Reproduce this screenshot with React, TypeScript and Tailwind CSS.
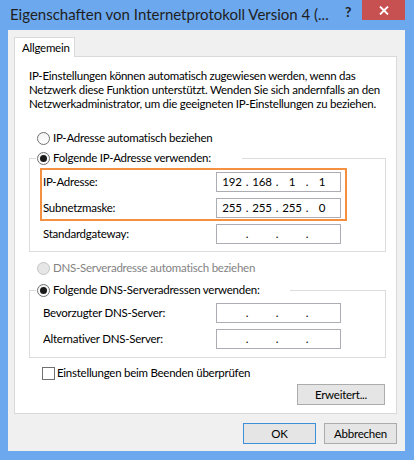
import React from 'react';

function Radio({ checked, disabled }: { checked?: boolean; disabled?: boolean }) {
	return (
		<span
			className={
				disabled
					? 'flex h-[13px] w-[13px] shrink-0 items-center justify-center rounded-full border border-[#c4c4c4] bg-[#e6e6e6]'
					: 'flex h-[13px] w-[13px] shrink-0 items-center justify-center rounded-full border border-[#707070] bg-gradient-to-b from-[#f2f2f2] to-white'
			}
		>
			{checked && <span className="h-[7px] w-[7px] rounded-full bg-[#1a1a1a]" />}
		</span>
	);
}

function IpBox({ parts }: { parts: string[] }) {
	return (
		<div className="flex h-[20px] w-[125px] items-center border border-[#abadb3] bg-white pl-[2px]">
			{parts.map((p, i) => (
				<React.Fragment key={i}>
					<span className="w-[26px] text-center">{p}</span>
					{i < 3 && <span className="w-[4px] text-center">.</span>}
				</React.Fragment>
			))}
		</div>
	);
}

function Row({ label, parts }: { label: string; parts: string[] }) {
	return (
		<div className="flex items-center">
			<span className="w-[174px] pl-[1px]">{label}</span>
			<IpBox parts={parts} />
		</div>
	);
}

const empty = ['', '', '', ''];

export default function App() {
	return (
		<div className="flex h-[460px] w-[414px] flex-col overflow-hidden whitespace-nowrap bg-[#6ca8ee] font-['Lato','Liberation_Sans',sans-serif] text-[11.5px] tracking-[-0.25px] text-black">
			{/* title bar */}
			<div className="flex h-[30px] shrink-0 items-start">
				<div className="flex h-[28px] flex-1 items-center pl-[10px] text-[15px] tracking-normal text-[#1e1e1e]">
					Eigenschaften von Internetprotokoll Version 4 (...
				</div>
				<div className="flex h-[22px] w-[28px] items-center justify-center text-[14px] font-bold text-[#222]">?</div>
				<div className="mr-[9px] flex h-[20px] w-[43px] items-center justify-center bg-[#c75050]">
					<svg width="10" height="9" viewBox="0 0 10 9">
						<path d="M1 0.5 L9 8.5 M9 0.5 L1 8.5" stroke="white" strokeWidth="1.8" />
					</svg>
				</div>
			</div>

			{/* client area */}
			<div className="mb-[9px] ml-[8px] mr-[9px] flex flex-1 flex-col bg-[#f0f0f0] pl-[6px] pr-[8px] pt-[7px]">
				<div className="relative z-10 -mb-px flex h-[20px] w-[61px] items-center border-x border-t border-[#d9d9d9] bg-white pl-[7px]">
					Allgemein
				</div>
				<div className="flex h-[358px] flex-col border border-[#d9d9d9] bg-white pl-[14px] pr-[10px] pt-[12px]">
					<p className="leading-[14px]">
						IP-Einstellungen können automatisch zugewiesen werden, wenn das
						<br />
						Netzwerk diese Funktion unterstützt. Wenden Sie sich andernfalls an den
						<br />
						Netzwerkadministrator, um die geeigneten IP-Einstellungen zu beziehen.
					</p>

					<div className="ml-[8px] mt-[19px] flex h-[16px] items-center gap-[3px]">
						<Radio />
						<span>IP-Adresse automatisch beziehen</span>
					</div>

					<fieldset className="mt-[4px] border border-[#dcdcdc] pb-[7px]">
						<legend className="ml-[6px] w-[206px] bg-white pl-[1px]">
							<div className="flex h-[16px] items-center gap-[3px]">
								<Radio checked />
								<span>Folgende IP-Adresse verwenden:</span>
							</div>
						</legend>
						<div className="ml-[10px] mr-[38px] mt-[2px] flex flex-col gap-[6px] border-2 border-[#f4903f] pb-[1px] pr-[4px] pt-[2px]">
							<Row label="IP-Adresse:" parts={['192', '168', '1', '1']} />
							<Row label="Subnetzmaske:" parts={['255', '255', '255', '0']} />
						</div>
						<div className="ml-[12px] mt-[3px]">
							<Row label="Standardgateway:" parts={empty} />
						</div>
					</fieldset>

					<div className="ml-[8px] mt-[8px] flex h-[16px] items-center gap-[3px] text-[#838383]">
						<Radio disabled />
						<span>DNS-Serveradresse automatisch beziehen</span>
					</div>

					<fieldset className="mt-[6px] border border-[#dcdcdc] pb-[8px]">
						<legend className="ml-[6px] w-[254px] bg-white pl-[1px]">
							<div className="flex h-[16px] items-center gap-[3px]">
								<Radio checked />
								<span>Folgende DNS-Serveradressen verwenden:</span>
							</div>
						</legend>
						<div className="ml-[12px] mt-[5px] flex flex-col gap-[6px]">
							<Row label="Bevorzugter DNS-Server:" parts={empty} />
							<Row label="Alternativer DNS-Server:" parts={empty} />
						</div>
					</fieldset>

					<div className="ml-[13px] mt-[7px] flex h-[16px] items-center gap-[2px]">
						<span className="h-[13px] w-[13px] border border-[#707070] bg-white" />
						<span>Einstellungen beim Beenden überprüfen</span>
					</div>

					<div className="mr-px mt-[3px] flex justify-end">
						<button className="flex h-[21px] w-[88px] items-center justify-center border border-[#acacac] bg-[#e5e5e5]">
							Erweitert...
						</button>
					</div>
				</div>

				<div className="mt-[9px] flex justify-end gap-[8px]">
					<button className="flex h-[21px] w-[73px] items-center justify-center border border-[#3d8fd6] bg-[#e5e5e5]">
						OK
					</button>
					<button className="flex h-[21px] w-[73px] items-center justify-center border border-[#acacac] bg-[#e5e5e5]">
						Abbrechen
					</button>
				</div>
			</div>
		</div>
	);
}
